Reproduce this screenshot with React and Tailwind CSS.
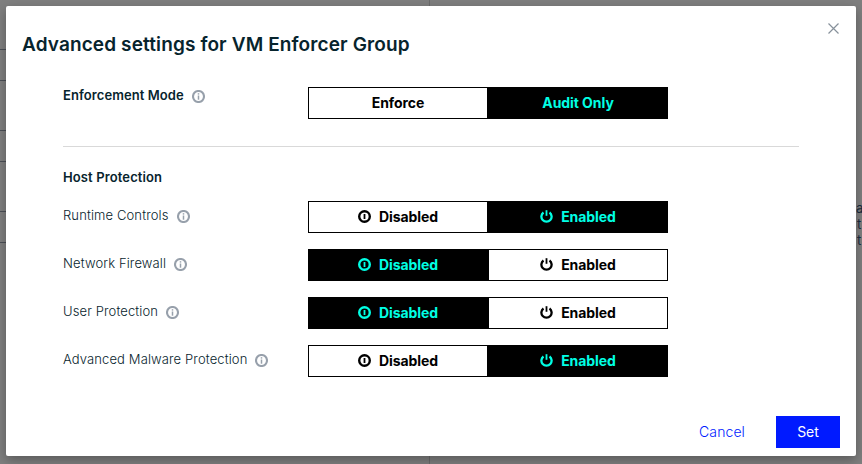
import React from "react";
import { clsx } from "clsx";

function InfoIcon() {
  return (
    <svg className="mt-px h-[13px] w-[13px] shrink-0" viewBox="0 0 13 13" fill="none">
      <circle cx="6.5" cy="6.5" r="5.5" stroke="#97a0ab" strokeWidth="2.1" />
      <path d="M6.5 5.5v4.2" stroke="#97a0ab" strokeWidth="1.5" />
      <path d="M6.5 3.2v1.4" stroke="#97a0ab" strokeWidth="1.5" />
    </svg>
  );
}

function DisabledIcon() {
  return (
    <svg className="-mt-px h-[13px] w-[13px] shrink-0" viewBox="0 0 13 13" fill="none" stroke="currentColor">
      <circle cx="6.5" cy="6.5" r="5.3" strokeWidth="2.4" />
      <path d="M6.5 4v5" strokeWidth="1.8" />
    </svg>
  );
}

function EnabledIcon() {
  return (
    <svg className="-mt-px h-[13px] w-[13px] shrink-0" viewBox="0 0 13 13" fill="none" stroke="currentColor">
      <path d="M3.5 2.5A5.1 5.1 0 1 0 9.5 2.5" strokeWidth="2.3" />
      <path d="M6.5 0.2v5.6" strokeWidth="1.8" />
    </svg>
  );
}

function Option({ active, icon, children }) {
  return (
    <button
      className={clsx(
        "flex h-8 w-[180px] items-center justify-center gap-2 border border-black pb-px text-[14px] font-bold tracking-[-0.06px]",
        active ? "bg-black text-[#00ffe4]" : "bg-white text-black"
      )}
    >
      {icon}
      <span>{children}</span>
    </button>
  );
}

function Setting({ label, enabled }) {
  return (
    <div className="flex h-8">
      <div className="flex h-[29px] w-[245px] items-center gap-[8px] text-[13px] font-light tracking-[0.12px] text-[#07242d]">
        <span>{label}</span>
        <InfoIcon />
      </div>
      <Option active={!enabled} icon={<DisabledIcon />}>Disabled</Option>
      <Option active={enabled} icon={<EnabledIcon />}>Enabled</Option>
    </div>
  );
}

function PageBehind() {
  return (
    <div className="absolute inset-0 text-[13px] leading-4 text-[#1b2c40]">
      <div className="absolute left-[429px] h-full w-px bg-[#6b6b6b]" />
      <div className="flex w-[20px] flex-col pt-[49px]">
        <div className="h-8 border-y border-[#4b4f56]" />
        <div className="mt-[49px] h-8 border-y border-[#4b4f56]" />
        <div className="mt-[49px] h-8 border-y border-[#4b4f56]" />
      </div>
      <div className="absolute left-[856px] top-[200px] whitespace-nowrap">
        <p>a</p>
        <p className="pl-px">t</p>
        <p className="pl-px">t</p>
      </div>
    </div>
  );
}

export default function App() {
  return (
    <div className="relative h-[464px] w-[862px] overflow-hidden bg-[#7f7f7f] p-[6px] font-['Inter',sans-serif]">
      <PageBehind />
      <section className="relative flex h-[450px] w-[850px] flex-col rounded-[2px] bg-white px-4 shadow-[0_4px_12px_rgba(0,0,0,0.3)]">
        <header className="flex h-[81px] items-start justify-between">
          <h1 className="pt-[25px] text-[19px] leading-[27px] font-semibold tracking-[0.12px] text-[#07242d]">
            Advanced settings for VM Enforcer Group
          </h1>
          <button aria-label="Close" className="mt-[17px] mr-px">
            <svg className="h-[11px] w-[11px]" viewBox="0 0 11 11" stroke="#87919b" strokeWidth="1.2">
              <path d="M0.5 0.5l10 10M10.5 0.5l-10 10" />
            </svg>
          </button>
        </header>
        <div className="mx-[41px] flex h-[60px] border-b border-[#d9d9d9]">
          <div className="flex h-[18px] w-[245px] items-center gap-2 text-[13px] font-semibold tracking-[0.08px] text-[#07242d]">
            <span>Enforcement Mode</span>
            <InfoIcon />
          </div>
          <Option>Enforce</Option>
          <Option active>Audit Only</Option>
        </div>
        <h2 className="mx-[41px] mt-[20px] text-[13px] leading-5 font-semibold tracking-[0.12px] text-[#07242d]">Host Protection</h2>
        <div className="mx-[41px] mt-[14px] flex flex-col gap-4">
          <Setting label="Runtime Controls" enabled />
          <Setting label="Network Firewall" enabled={false} />
          <Setting label="User Protection" enabled={false} />
          <Setting label="Advanced Malware Protection" enabled />
        </div>
        <footer className="mt-[39px] flex justify-end gap-[31px] text-[14px]">
          <button className="h-8 pb-px font-light tracking-[0.1px] text-[#001aff]">Cancel</button>
          <button className="h-8 w-16 bg-[#001aff] pb-px text-white">Set</button>
        </footer>
      </section>
    </div>
  );
}
